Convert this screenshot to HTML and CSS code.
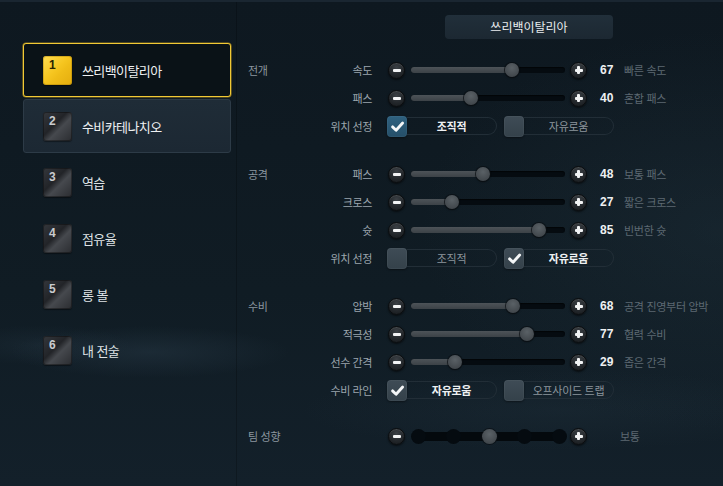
FILE: index.html
```html
<!DOCTYPE html>
<html lang="ko">
<head>
<meta charset="utf-8">
<title>전술</title>
<link rel="stylesheet" href="styles.css">
</head>
<body>
<div class="app">
  <aside class="sidebar">
    <div class="tactic active"><span class="badge gold">1</span><span class="name">쓰리백이탈리아</span></div>
    <div class="tactic hover"><span class="badge">2</span><span class="name">수비카테나치오</span></div>
    <div class="tactic"><span class="badge">3</span><span class="name">역습</span></div>
    <div class="tactic"><span class="badge">4</span><span class="name">점유율</span></div>
    <div class="tactic"><span class="badge">5</span><span class="name">롱 볼</span></div>
    <div class="tactic"><span class="badge">6</span><span class="name">내 전술</span></div>
  </aside>

  <main class="main">
    <div class="title-wrap"><div class="title">쓰리백이탈리아</div></div>

    <section class="section">
      <div class="sec-title">전개</div>
      <div class="rows">
        <div class="row">
          <span class="label">속도</span>
          <span class="btn minus"></span>
          <div class="track"><div class="fill" style="width:67%"></div></div>
          <span class="btn plus"></span>
          <span class="value">67</span>
          <span class="desc">빠른 속도</span>
        </div>
        <div class="row">
          <span class="label">패스</span>
          <span class="btn minus"></span>
          <div class="track"><div class="fill" style="width:40%"></div></div>
          <span class="btn plus"></span>
          <span class="value">40</span>
          <span class="desc">혼합 패스</span>
        </div>
        <div class="row">
          <span class="label">위치 선정</span>
          <div class="opts">
            <div class="opt on"><span class="check blue"><svg viewBox="0 0 20 20"><path d="M4.8 10.4l3.7 3.5L15.4 6.4"/></svg></span><span class="pill">조직적</span></div>
            <div class="opt"><span class="check"></span><span class="pill">자유로움</span></div>
          </div>
        </div>
      </div>
    </section>

    <section class="section">
      <div class="sec-title">공격</div>
      <div class="rows">
        <div class="row">
          <span class="label">패스</span>
          <span class="btn minus"></span>
          <div class="track"><div class="fill" style="width:48%"></div></div>
          <span class="btn plus"></span>
          <span class="value">48</span>
          <span class="desc">보통 패스</span>
        </div>
        <div class="row">
          <span class="label">크로스</span>
          <span class="btn minus"></span>
          <div class="track"><div class="fill" style="width:27%"></div></div>
          <span class="btn plus"></span>
          <span class="value">27</span>
          <span class="desc">짧은 크로스</span>
        </div>
        <div class="row">
          <span class="label">슛</span>
          <span class="btn minus"></span>
          <div class="track"><div class="fill" style="width:85%"></div></div>
          <span class="btn plus"></span>
          <span class="value">85</span>
          <span class="desc">빈번한 슛</span>
        </div>
        <div class="row">
          <span class="label">위치 선정</span>
          <div class="opts">
            <div class="opt"><span class="check"></span><span class="pill">조직적</span></div>
            <div class="opt on"><span class="check"><svg viewBox="0 0 20 20"><path d="M4.8 10.4l3.7 3.5L15.4 6.4"/></svg></span><span class="pill">자유로움</span></div>
          </div>
        </div>
      </div>
    </section>

    <section class="section">
      <div class="sec-title">수비</div>
      <div class="rows">
        <div class="row">
          <span class="label">압박</span>
          <span class="btn minus"></span>
          <div class="track"><div class="fill" style="width:68%"></div></div>
          <span class="btn plus"></span>
          <span class="value">68</span>
          <span class="desc">공격 진영부터 압박</span>
        </div>
        <div class="row">
          <span class="label">적극성</span>
          <span class="btn minus"></span>
          <div class="track"><div class="fill" style="width:77%"></div></div>
          <span class="btn plus"></span>
          <span class="value">77</span>
          <span class="desc">협력 수비</span>
        </div>
        <div class="row">
          <span class="label">선수 간격</span>
          <span class="btn minus"></span>
          <div class="track"><div class="fill" style="width:29%"></div></div>
          <span class="btn plus"></span>
          <span class="value">29</span>
          <span class="desc">좁은 간격</span>
        </div>
        <div class="row">
          <span class="label">수비 라인</span>
          <div class="opts">
            <div class="opt on"><span class="check"><svg viewBox="0 0 20 20"><path d="M4.8 10.4l3.7 3.5L15.4 6.4"/></svg></span><span class="pill">자유로움</span></div>
            <div class="opt"><span class="check"></span><span class="pill">오프사이드 트랩</span></div>
          </div>
        </div>
      </div>
    </section>

    <section class="section team">
      <div class="sec-title">팀 성향</div>
      <div class="rows">
        <div class="row">
          <span class="label"></span>
          <span class="btn minus"></span>
          <div class="steps">
            <span class="dot"></span><span class="dot"></span><span class="dot cur"></span><span class="dot"></span><span class="dot"></span>
          </div>
          <span class="btn plus"></span>
          <span class="desc mood">보통</span>
        </div>
      </div>
    </section>
  </main>
</div>
</body>
</html>
```

FILE: styles.css
```css
* { box-sizing: border-box; }

html, body {
  margin: 0;
  padding: 0;
}

body {
  width: 723px;
  height: 486px;
  overflow: hidden;
  font-family: "Noto Sans CJK KR", "Noto Sans", sans-serif;
  color: #e6e9ec;
  background-color: #0f1a21;
  background-image:
    radial-gradient(ellipse 140px 26px at 150px 352px, rgba(70, 95, 115, 0.2), transparent),
    radial-gradient(ellipse 90px 20px at 40px 345px, rgba(70, 95, 115, 0.12), transparent),
    radial-gradient(ellipse 260px 40px at 560px 410px, rgba(60, 85, 100, 0.12), transparent),
    radial-gradient(ellipse 300px 200px at 720px 230px, rgba(40, 60, 72, 0.28), transparent),
    linear-gradient(180deg, #0e1820 0%, #101c24 60%, #13202a 100%);
}

.app {
  display: grid;
  grid-template-columns: 236px 1fr;
  height: 486px;
  border-top: 2px solid #1a2631;
}

/* ---------- sidebar ---------- */
.sidebar {
  display: flex;
  flex-direction: column;
  gap: 2px;
  padding: 41px 0 0 23px;
}

.tactic {
  width: 208px;
  height: 54px;
  display: flex;
  align-items: center;
  padding-left: 19px;
  border: 1px solid transparent;
  border-radius: 3px;
}

.tactic.active {
  background: #0a1217;
  border-color: #f1c935;
  box-shadow: 0 0 0 0.6px rgba(200, 158, 30, 0.7);
}

.tactic.hover {
  background: linear-gradient(180deg, #1f2c37 0%, #1c2833 100%);
  border-color: #2d3b47;
}

.badge {
  width: 29px;
  height: 29px;
  border-radius: 3px;
  flex: none;
  padding: 2px 0 0 6px;
  font-family: "Liberation Sans", Arial, sans-serif;
  font-weight: bold;
  font-size: 12px;
  line-height: 14px;
  color: #c9cbce;
  background: linear-gradient(135deg, #34373c 0%, #222428 42%, #46494e 58%, #2a2c30 100%);
  box-shadow: inset 0 0 0 1px rgba(0, 0, 0, 0.35), 0 1px 1px rgba(0, 0, 0, 0.4);
}

.badge.gold {
  color: #2b2300;
  background: linear-gradient(135deg, #ffdc52 0%, #f6c620 45%, #f0bd18 60%, #e4ad0e 100%);
  box-shadow: inset 0 0 0 1px rgba(150, 110, 0, 0.35), 0 1px 1px rgba(0, 0, 0, 0.4);
}

.name {
  margin-left: 10px;
  font-size: 13px;
  letter-spacing: -0.6px;
  color: #dfe3e6;
}

.tactic.active .name,
.tactic.hover .name {
  color: #eef0f2;
}

/* ---------- main ---------- */
.main {
  border-left: 1px solid rgba(0, 0, 0, 0.22);
  padding: 13px 0 0 11px;
}

.title-wrap {
  padding-left: 197px;
  margin-bottom: 17px;
}

.title {
  width: 168px;
  height: 24px;
  border-radius: 4px;
  background: linear-gradient(180deg, #212f3a 0%, #1c2832 100%);
  font-size: 12px;
  line-height: 24px;
  text-align: center;
  color: #e9ecee;
}

.section {
  display: flex;
  margin-bottom: 20px;
}

.section.team {
  margin-top: -2px;
}

.sec-title {
  width: 48px;
  flex: none;
  font-size: 11px;
  line-height: 28px;
  color: #8b969f;
  letter-spacing: -0.3px;
}

.rows {
  display: flex;
  flex-direction: column;
}

.row {
  height: 28px;
  display: flex;
  align-items: center;
}

.label {
  width: 76px;
  flex: none;
  margin-right: 16px;
  text-align: right;
  font-size: 11px;
  letter-spacing: -0.4px;
  color: #9ba5ad;
}

.btn {
  position: relative;
  width: 17px;
  height: 17px;
  flex: none;
  border-radius: 50%;
  background: radial-gradient(circle at 50% 30%, #3b4045 0%, #24282c 55%, #15181b 100%);
  border: 1px solid #0b0d0f;
  box-shadow: 0 1px 2px rgba(0, 0, 0, 0.6), inset 0 1px 0 rgba(255, 255, 255, 0.12);
}

.btn::before,
.btn::after {
  content: "";
  position: absolute;
  left: 50%;
  top: 50%;
  background: #f2f3f4;
  border-radius: 1px;
}

.btn::before {
  width: 8px;
  height: 3px;
  margin: -1.5px 0 0 -4px;
}

.btn.minus::after {
  display: none;
}

.btn.plus::after {
  width: 3px;
  height: 8px;
  margin: -4px 0 0 -1.5px;
}

.track {
  position: relative;
  width: 154px;
  height: 6px;
  padding-right: 4px;
  margin: 0 5px 0 6px;
  border-radius: 3px;
  background: #050b10;
  box-shadow: inset 0 1px 1px rgba(0, 0, 0, 0.6);
}

.fill {
  position: relative;
  height: 6px;
  border-radius: 3px;
  background: linear-gradient(180deg, #4d5358 0%, #3c4247 100%);
}

.fill::after {
  content: "";
  position: absolute;
  right: -7px;
  top: -4px;
  width: 14px;
  height: 14px;
  border-radius: 50%;
  background: radial-gradient(circle at 50% 35%, #5a6166 0%, #464c51 60%, #393e42 100%);
  box-shadow: 0 0 0 1px rgba(10, 14, 18, 0.7), 0 1px 2px rgba(0, 0, 0, 0.5);
}

.value {
  width: 20px;
  margin-left: 13px;
  font-size: 12px;
  font-weight: bold;
  font-family: "Liberation Sans", Arial, sans-serif;
  color: #eef0f2;
}

.desc {
  margin-left: 4px;
  font-size: 11px;
  letter-spacing: -0.3px;
  color: #5d6972;
  white-space: nowrap;
}

.desc.mood {
  margin-left: 33px;
}

/* ---------- options ---------- */
.opts {
  display: flex;
  gap: 7px;
  margin-left: -1px;
}

.opt {
  width: 110px;
  height: 21px;
  display: flex;
  align-items: center;
}

.check {
  width: 20px;
  height: 21px;
  flex: none;
  border-radius: 4px;
  display: flex;
  align-items: center;
  justify-content: center;
  background: linear-gradient(180deg, #3f4c56 0%, #34414a 100%);
  box-shadow: inset 0 0 0 1px rgba(255, 255, 255, 0.04), 0 1px 2px rgba(0, 0, 0, 0.4);
}

.check.blue {
  background: linear-gradient(180deg, #2f617f 0%, #254f69 100%);
}

.check svg {
  width: 19px;
  height: 19px;
}

.check svg path {
  fill: none;
  stroke: #f4f6f7;
  stroke-width: 3;
  stroke-linecap: round;
  stroke-linejoin: round;
}

.pill {
  flex: 1;
  height: 18px;
  border: 1px solid #222e37;
  border-left: none;
  border-radius: 0 9px 9px 0;
  font-size: 11px;
  line-height: 16px;
  text-align: center;
  color: #8c959c;
  letter-spacing: -0.3px;
  white-space: nowrap;
}

.opt.on .pill {
  color: #eef0f2;
  font-weight: bold;
}

/* ---------- team style ---------- */
.steps {
  position: relative;
  width: 156px;
  height: 15px;
  margin: 0 3px 0 6px;
  display: flex;
  justify-content: space-between;
  align-items: center;
}

.steps::before {
  content: "";
  position: absolute;
  left: 4px;
  right: 4px;
  top: 3px;
  height: 9px;
  background: #04090d;
  border-radius: 4px;
}

.dot {
  position: relative;
  width: 15px;
  height: 15px;
  border-radius: 50%;
  background: #050b10;
}

.dot.cur {
  background: radial-gradient(circle at 50% 35%, #5a6166 0%, #464c51 60%, #393e42 100%);
  box-shadow: 0 0 0 1px rgba(10, 14, 18, 0.7);
}
```
